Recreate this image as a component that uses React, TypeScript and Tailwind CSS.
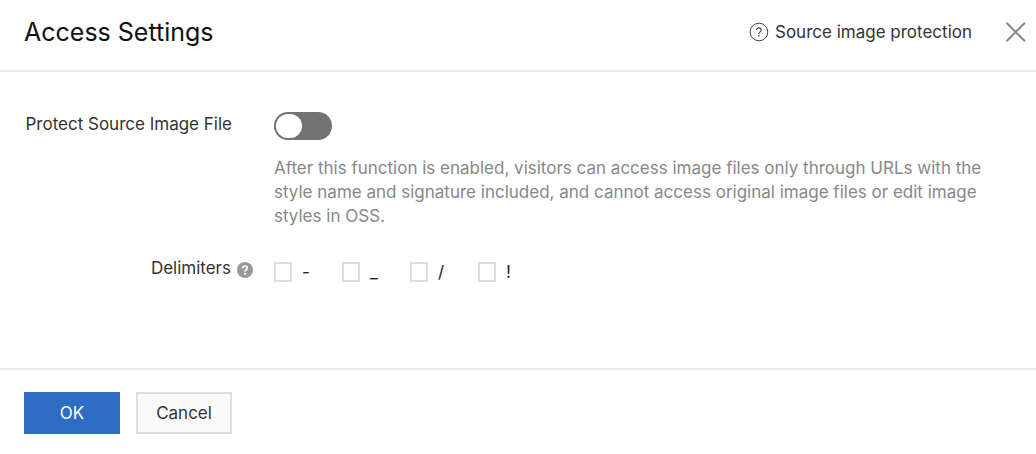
import { useState, type ReactNode } from "react";

function CloseIcon() {
  return (
    <svg width="20" height="20" viewBox="0 0 20 20" fill="none" stroke="#868686" strokeWidth="2" strokeLinecap="round" aria-hidden="true">
      <path d="M1 1.2 18.4 18.8M18.4 1.2 1 18.8" />
    </svg>
  );
}

function HelpOutlineIcon() {
  return (
    <svg width="20" height="20" viewBox="0 0 20 20" fill="none" stroke="#444" aria-hidden="true">
      <circle cx="10" cy="10" r="8.8" strokeWidth="1" />
      <path d="M7.6 8.2c0-1.4 1-2.3 2.3-2.3s2.3.9 2.3 2.1c0 1.8-2.3 1.9-2.3 3.9" strokeWidth="1.1" />
      <circle cx="9.9" cy="13.9" r="0.8" fill="#444" stroke="none" />
    </svg>
  );
}

function HelpSolidIcon() {
  return (
    <svg width="16" height="16" viewBox="0 0 16 16" fill="none" aria-hidden="true">
      <circle cx="8" cy="8" r="8" fill="#999" />
      <path d="M5.7 6.2c0-1.4 1-2.2 2.3-2.2s2.3.8 2.3 2c0 1.6-2.2 1.6-2.2 3.4" stroke="#fff" strokeWidth="1.7" />
      <circle cx="8.1" cy="11.8" r="1.1" fill="#fff" />
    </svg>
  );
}

function Delimiter({ children }: { children: ReactNode }) {
  return (
    <label className="flex items-center gap-2.5 text-[#222]">
      <input type="checkbox" className="h-5 w-[18px] shrink-0 appearance-none border-2 border-[#dedede] bg-white checked:bg-[#2e6dc5]" />
      <span className="w-2">{children}</span>
    </label>
  );
}

export default function App() {
  const [enabled, setEnabled] = useState(false);

  return (
    <section className="bg-white pb-5 font-['Inter','Liberation_Sans',sans-serif] text-[17px] leading-6 font-[370] text-[#333]">
      <header className="flex items-center border-b-2 border-[#e9e9e9] px-6 pt-3.5 pb-5">
        <h1 className="flex-1 text-[25px] leading-9 font-normal text-[#111]">Access Settings</h1>
        <a href="#help" className="flex items-center gap-1.5">
          <HelpOutlineIcon />
          Source image protection
        </a>
        <button type="button" aria-label="Close" className="-mr-3.5 ml-[34px]">
          <CloseIcon />
        </button>
      </header>

      <div className="grid grid-cols-[208px_1fr] gap-x-[42px] gap-y-7 pt-10 pr-12 pb-[84px] pl-6">
        <label htmlFor="protect" className="text-right">Protect Source Image File</label>
        <div>
          <button
            id="protect"
            type="button"
            role="switch"
            aria-checked={enabled}
            onClick={() => setEnabled(!enabled)}
            className="flex h-7 w-[58px] rounded-full bg-[#737373] p-0.5 aria-checked:justify-end"
          >
            <span className="h-6 w-[26px] rounded-full bg-white" />
          </button>
          <p className="mt-4 text-[#888]">
            After this function is enabled, visitors can access image files only through URLs with the style name and
            signature included, and cannot access original image files or edit image styles in OSS.
          </p>
        </div>

        <div className="-mr-[21px] flex items-start justify-end gap-1.5">
          Delimiters
          <span className="pt-1.5"><HelpSolidIcon /></span>
        </div>
        <div className="flex items-center gap-8 pt-1">
          <Delimiter>-</Delimiter>
          <Delimiter>_</Delimiter>
          <Delimiter>/</Delimiter>
          <Delimiter>!</Delimiter>
        </div>
      </div>

      <footer className="flex gap-4 border-t-2 border-[#e9e9e9] px-6 pt-[22px]">
        <button type="button" className="h-[42px] w-24 bg-[#2e6dc5] text-white">OK</button>
        <button type="button" className="h-[42px] w-24 border-2 border-[#dedede] bg-[#fafafa]">Cancel</button>
      </footer>
    </section>
  );
}
